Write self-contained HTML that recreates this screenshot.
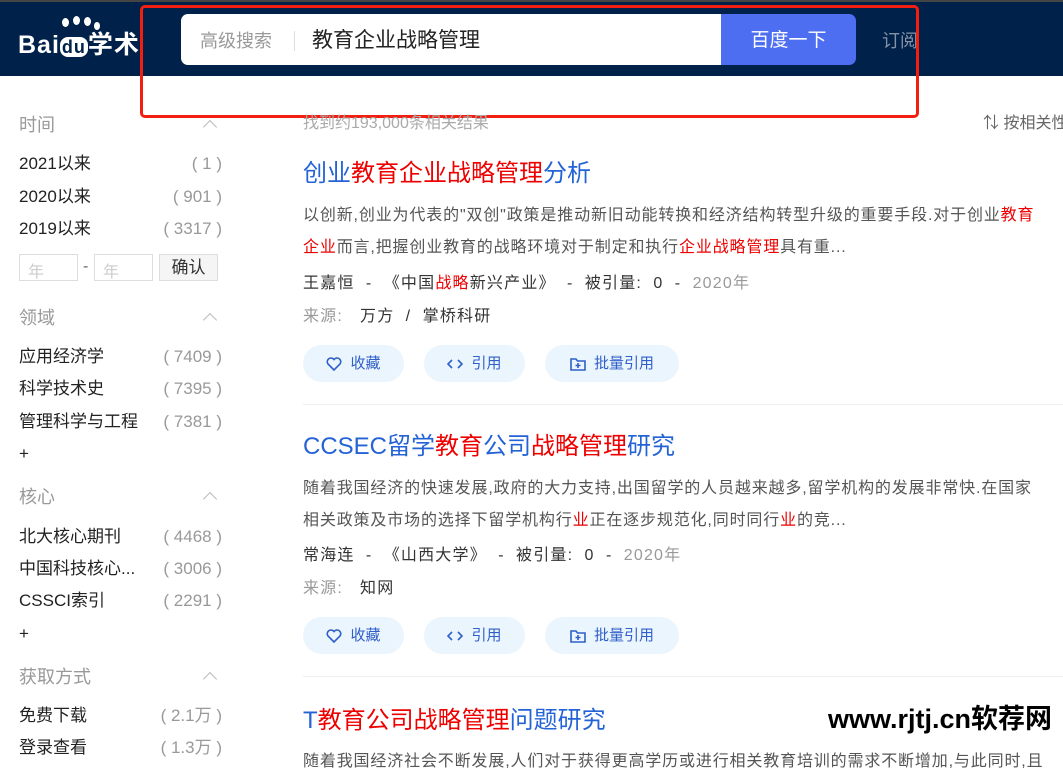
<!DOCTYPE html>
<html><head><meta charset="utf-8"><style>
*{margin:0;padding:0;box-sizing:border-box}
body{width:1063px;height:763px;overflow:hidden;background:#fff;position:relative;font-family:"Liberation Sans","Noto Sans CJK SC",sans-serif;color:#222}
.a{position:absolute;white-space:nowrap;line-height:20px}
.h{font-size:18px;color:#999}
.i{font-size:17px;color:#222}
.c{font-size:17px;color:#999;text-align:right;width:80px;left:142px}
.car{position:absolute;left:205px;width:10px;height:10px;border-left:1.5px solid #bbb;border-top:1.5px solid #bbb;transform:rotate(45deg)}
.ti{font-size:24px;color:#2463d6;line-height:30px}
.r{color:#e00}
.sn{font-size:16px;color:#555;line-height:20px;letter-spacing:0.85px}
.me{font-size:16px;color:#333;letter-spacing:1.2px}
.btn{position:absolute;height:37px;border-radius:19px;background:#eaf5fe;color:#2f5fc8;font-size:15px;line-height:37px;display:flex;align-items:center;justify-content:center;gap:8px}
.btn svg{stroke:#2f5fc8;fill:none;stroke-width:1.6}
</style></head><body>
<div style="position:absolute;left:0;top:0;width:1063px;height:76px;background:#00214a;border-top:2px solid #444"></div>
<div class="a" style="left:18px;top:30px;font-size:25px;font-weight:bold;color:#fff;line-height:30px;letter-spacing:1px">Bai<span style="display:inline-block;background:#fff;color:#00214a;border-radius:8px;font-size:18px;padding:0 2px;line-height:20px">du</span>学术</div>
<div style="position:absolute;left:62px;top:18px;width:7px;height:9px;border-radius:50%;background:#fff"></div>
<div style="position:absolute;left:73px;top:16px;width:7px;height:9px;border-radius:50%;background:#fff"></div>
<div style="position:absolute;left:84px;top:17px;width:7px;height:9px;border-radius:50%;background:#fff"></div>
<div style="position:absolute;left:94px;top:22px;width:6px;height:8px;border-radius:50%;background:#fff"></div>
<div style="position:absolute;left:181px;top:14px;width:545px;height:51px;background:#fff;border-radius:7px 0 0 7px"></div>
<div class="a" style="left:200px;top:31px;font-size:18px;color:#999">高级搜索</div>
<div style="position:absolute;left:294px;top:31px;width:1px;height:20px;background:#ddd"></div>
<div class="a" style="left:312px;top:29px;font-size:21px;color:#222;line-height:24px">教育企业战略管理</div>
<div style="position:absolute;left:721px;top:14px;width:135px;height:51px;background:#4e6ef2;border-radius:0 7px 7px 0;color:#fff;font-size:19px;line-height:53px;text-align:center">百度一下</div>
<div class="a" style="left:882px;top:31px;font-size:18px;color:#8592a6">订阅</div>
<div style="position:absolute;left:140px;top:5px;width:779px;height:113px;border:3px solid #f21f10;border-radius:5px"></div>

<div class="a h" style="left:19px;top:115px">时间</div><div class="car" style="top:122px"></div>
<div class="a i" style="left:19px;top:154px">2021以来</div><div class="a c" style="top:154px">( 1 )</div>
<div class="a i" style="left:19px;top:187px">2020以来</div><div class="a c" style="top:187px">( 901 )</div>
<div class="a i" style="left:19px;top:219px">2019以来</div><div class="a c" style="top:219px">( 3317 )</div>
<div style="position:absolute;left:19px;top:254px;width:59px;height:27px;border:1px solid #ddd;color:#ccc;font-size:16px;padding:3px 8px">年</div>
<div class="a" style="left:83px;top:257px;color:#666">-</div>
<div style="position:absolute;left:94px;top:254px;width:59px;height:27px;border:1px solid #ddd;color:#ccc;font-size:16px;padding:3px 8px">年</div>
<div style="position:absolute;left:159px;top:254px;width:59px;height:27px;border:1px solid #ddd;background:#f5f5f5;color:#333;font-size:17px;text-align:center;line-height:25px">确认</div>
<div class="a h" style="left:19px;top:308px">领域</div><div class="car" style="top:315px"></div>
<div class="a i" style="left:19px;top:347px">应用经济学</div><div class="a c" style="top:347px">( 7409 )</div>
<div class="a i" style="left:19px;top:379px">科学技术史</div><div class="a c" style="top:379px">( 7395 )</div>
<div class="a i" style="left:19px;top:412px">管理科学与工程</div><div class="a c" style="top:412px">( 7381 )</div>
<div class="a i" style="left:19px;top:444px">+</div>
<div class="a h" style="left:19px;top:487px">核心</div><div class="car" style="top:494px"></div>
<div class="a i" style="left:19px;top:527px">北大核心期刊</div><div class="a c" style="top:527px">( 4468 )</div>
<div class="a i" style="left:19px;top:559px">中国科技核心...</div><div class="a c" style="top:559px">( 3006 )</div>
<div class="a i" style="left:19px;top:591px">CSSCI索引</div><div class="a c" style="top:591px">( 2291 )</div>
<div class="a i" style="left:19px;top:624px">+</div>
<div class="a h" style="left:19px;top:667px">获取方式</div><div class="car" style="top:674px"></div>
<div class="a i" style="left:19px;top:706px">免费下载</div><div class="a c" style="top:706px">( 2.1万 )</div>
<div class="a i" style="left:19px;top:738px">登录查看</div><div class="a c" style="top:738px">( 1.3万 )</div>

<div class="a" style="left:303px;top:114px;font-size:16px;color:#aaa">找到约193,000条相关结果</div>
<div class="a" style="left:983px;top:114px;font-size:16px;color:#666">⇅ 按相关性</div>

<div class="a ti" style="left:303px;top:159px">创业<span class="r">教育企业战略管理</span>分析</div>
<div class="a sn" style="left:303px;top:206px">以创新,创业为代表的"双创"政策是推动新旧动能转换和经济结构转型升级的重要手段.对于创业<span class="r">教育</span></div>
<div class="a sn" style="left:303px;top:238px"><span class="r">企业</span>而言,把握创业教育的战略环境对于制定和执行<span class="r">企业战略管理</span>具有重...</div>
<div class="a me" style="left:303px;top:274px">王嘉恒 &nbsp;- &nbsp;《中国<span class="r">战略</span>新兴产业》 &nbsp;- &nbsp;被引量: &nbsp;0 &nbsp;- &nbsp;<span style="color:#999">2020年</span></div>
<div class="a me" style="left:303px;top:307px"><span style="color:#999">来源: </span>&nbsp; 万方 &nbsp;/ &nbsp;掌桥科研</div>
<div class="btn" style="left:303px;top:345px;width:101px"><svg width="16" height="14" viewBox="0 0 16 14"><path d="M8 13L2 7A3.3 3.3 0 0 1 8 2.5A3.3 3.3 0 0 1 14 7Z"/></svg>收藏</div>
<div class="btn" style="left:424px;top:345px;width:101px"><svg width="16" height="12" viewBox="0 0 16 12"><path d="M5 2L1 6L5 10M11 2L15 6L11 10"/></svg>引用</div>
<div class="btn" style="left:545px;top:345px;width:134px"><svg width="16" height="14" viewBox="0 0 16 14"><path d="M1 2H6L7.5 4H15V13H1ZM8 6V11M5.5 8.5H10.5"/></svg>批量引用</div>
<div style="position:absolute;left:303px;top:404px;width:760px;height:1px;background:#eee"></div>

<div class="a ti" style="left:303px;top:432px">CCSEC留学<span class="r">教育</span>公司<span class="r">战略管理</span>研究</div>
<div class="a sn" style="left:303px;top:479px">随着我国经济的快速发展,政府的大力支持,出国留学的人员越来越多,留学机构的发展非常快.在国家</div>
<div class="a sn" style="left:303px;top:511px">相关政策及市场的选择下留学机构行<span class="r">业</span>正在逐步规范化,同时同行<span class="r">业</span>的竞...</div>
<div class="a me" style="left:303px;top:546px">常海连 &nbsp;- &nbsp;《山西大学》 &nbsp;- &nbsp;被引量: &nbsp;0 &nbsp;- &nbsp;<span style="color:#999">2020年</span></div>
<div class="a me" style="left:303px;top:579px"><span style="color:#999">来源: </span>&nbsp; 知网</div>
<div class="btn" style="left:303px;top:617px;width:101px"><svg width="16" height="14" viewBox="0 0 16 14"><path d="M8 13L2 7A3.3 3.3 0 0 1 8 2.5A3.3 3.3 0 0 1 14 7Z"/></svg>收藏</div>
<div class="btn" style="left:424px;top:617px;width:101px"><svg width="16" height="12" viewBox="0 0 16 12"><path d="M5 2L1 6L5 10M11 2L15 6L11 10"/></svg>引用</div>
<div class="btn" style="left:545px;top:617px;width:134px"><svg width="16" height="14" viewBox="0 0 16 14"><path d="M1 2H6L7.5 4H15V13H1ZM8 6V11M5.5 8.5H10.5"/></svg>批量引用</div>
<div style="position:absolute;left:303px;top:676px;width:760px;height:1px;background:#eee"></div>

<div class="a ti" style="left:303px;top:706px">T<span class="r">教育公司战略管理</span>问题研究</div>
<div class="a" style="left:828px;top:703px;font-size:27px;font-weight:bold;color:#000;line-height:32px">www.rjtj.cn软荐网</div>
<div class="a sn" style="left:303px;top:752px">随着我国经济社会不断发展,人们对于获得更高学历或进行相关教育培训的需求不断增加,与此同时,且</div>
</body></html>
